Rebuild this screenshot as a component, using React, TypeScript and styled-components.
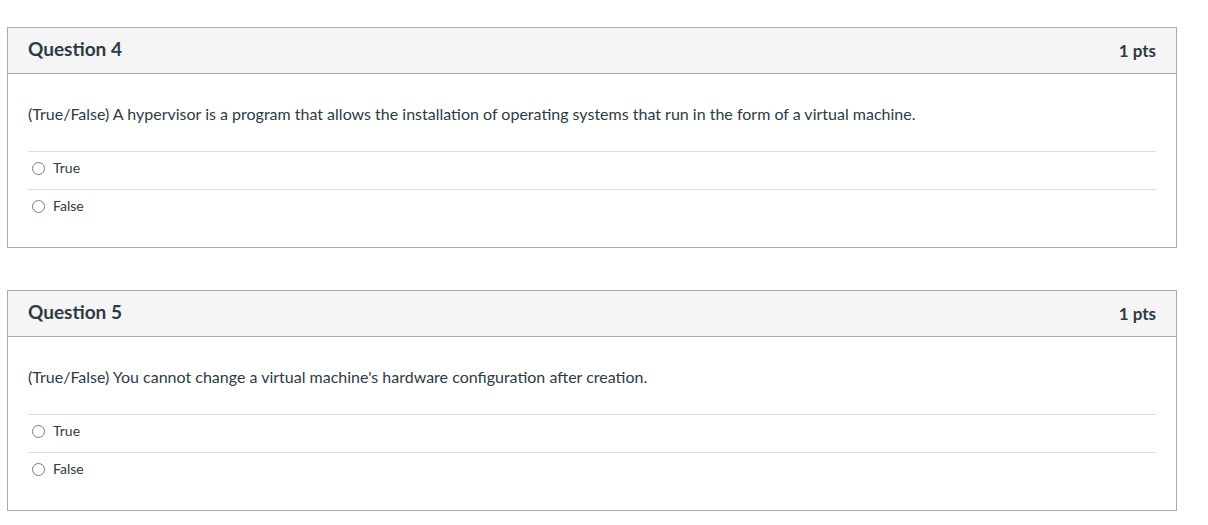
import React from "react";
import styled, { createGlobalStyle } from "styled-components";

const GlobalStyle = createGlobalStyle`
  body {
    margin: 0;
    background: #fff;
    font-family: Lato, "Noto Sans", sans-serif;
    color: #2d3b45;
  }
`;

const Page = styled.div`
  padding: 27px 0 0 7px;
  width: 1170px;
  display: flex;
  flex-direction: column;
  gap: 42px;
`;

const Card = styled.div`
  border: 1px solid #aaaaaa;
  background: #fff;
`;

const Header = styled.div`
  display: flex;
  align-items: center;
  justify-content: space-between;
  height: 45px;
  padding: 0 20px;
  background: #f5f5f5;
  border-bottom: 1px solid #aaaaaa;
`;

const Title = styled.h2`
  margin: 0 0 4px 0;
  font-size: 19px;
  line-height: 24px;
  font-weight: 700;
  color: #2d3b45;
`;

const Points = styled.span`
  font-size: 17px;
  line-height: 22px;
  font-weight: 700;
  color: #2d3b45;
`;

const Body = styled.div`
  padding: 30px 20px 20px 20px;
`;

const QuestionText = styled.p`
  margin: 0 0 27px 0;
  font-size: 16px;
  line-height: 20px;
`;

const Answers = styled.div`
  display: flex;
  flex-direction: column;
`;

const Answer = styled.label`
  display: flex;
  align-items: center;
  gap: 8px;
  height: 32px;
  padding: 0 0 5px 4px;
  border-top: 1px solid #dddddd;
  font-size: 14px;
  line-height: 18px;
  color: #2d3b45;
  cursor: pointer;
`;

const Radio = styled.span`
  width: 11px;
  height: 11px;
  border-radius: 50%;
  border: 1px solid #737d85;
  background: #fff;
  flex: none;
`;

const questions = [
  {
    n: 4,
    text: "(True/False) A hypervisor is a program that allows the installation of operating systems that run in the form of a virtual machine.",
  },
  {
    n: 5,
    text: "(True/False) You cannot change a virtual machine's hardware configuration after creation.",
  },
];

const App: React.FC = () => (
  <>
    <GlobalStyle />
    <Page>
      {questions.map((q) => (
        <Card key={q.n}>
          <Header>
            <Title>Question {q.n}</Title>
            <Points>1 pts</Points>
          </Header>
          <Body>
            <QuestionText>{q.text}</QuestionText>
            <Answers>
              {["True", "False"].map((a) => (
                <Answer key={a}>
                  <Radio />
                  {a}
                </Answer>
              ))}
            </Answers>
          </Body>
        </Card>
      ))}
    </Page>
  </>
);

export default App;
